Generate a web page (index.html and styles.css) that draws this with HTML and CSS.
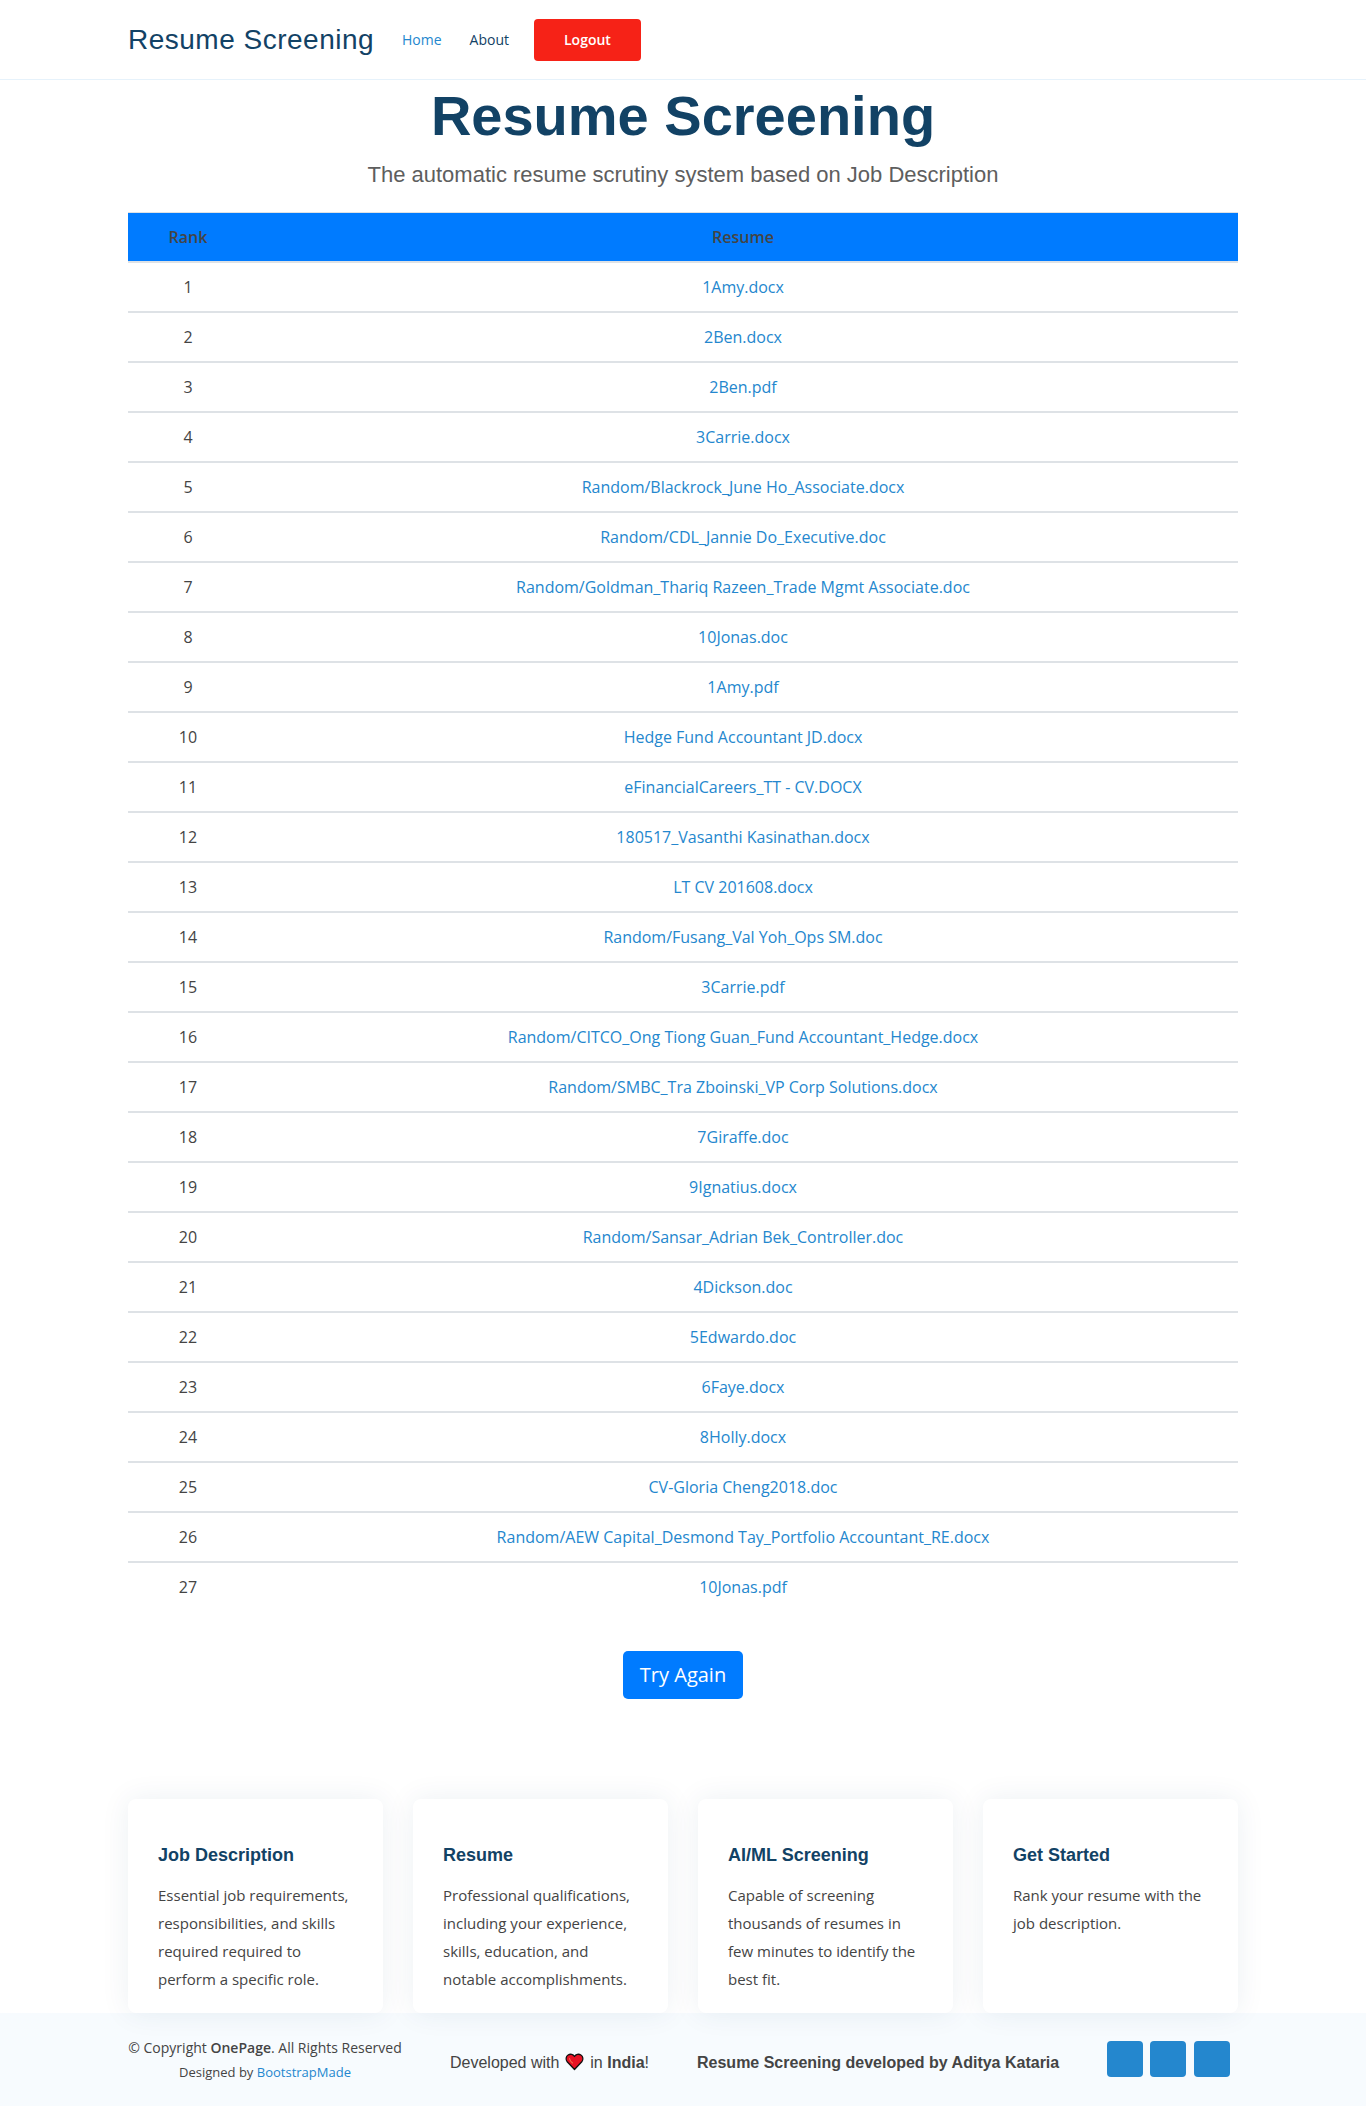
FILE: index.html
```html
<!DOCTYPE html>
<html lang="en">
<head>
<meta charset="utf-8">
<title>Resume Screening</title>
<link rel="stylesheet" href="styles.css">
</head>
<body>
<header class="header">
  <div class="container header-inner">
    <a class="logo" href="#">Resume Screening</a>
    <nav class="nav">
      <a class="nav-link active" href="#">Home</a>
      <a class="nav-link" href="#">About</a>
    </nav>
    <a class="logout" href="#">Logout</a>
  </div>
</header>
<main class="container">
  <h1 class="title">Resume Screening</h1>
  <h2 class="subtitle">The automatic resume scrutiny system based on Job Description</h2>
  <table class="ranking">
    <thead><tr><th class="rank">Rank</th><th>Resume</th></tr></thead>
    <tbody>
      <tr><td>1</td><td><a href="#">1Amy.docx</a></td></tr>
      <tr><td>2</td><td><a href="#">2Ben.docx</a></td></tr>
      <tr><td>3</td><td><a href="#">2Ben.pdf</a></td></tr>
      <tr><td>4</td><td><a href="#">3Carrie.docx</a></td></tr>
      <tr><td>5</td><td><a href="#">Random/Blackrock_June Ho_Associate.docx</a></td></tr>
      <tr><td>6</td><td><a href="#">Random/CDL_Jannie Do_Executive.doc</a></td></tr>
      <tr><td>7</td><td><a href="#">Random/Goldman_Thariq Razeen_Trade Mgmt Associate.doc</a></td></tr>
      <tr><td>8</td><td><a href="#">10Jonas.doc</a></td></tr>
      <tr><td>9</td><td><a href="#">1Amy.pdf</a></td></tr>
      <tr><td>10</td><td><a href="#">Hedge Fund Accountant JD.docx</a></td></tr>
      <tr><td>11</td><td><a href="#">eFinancialCareers_TT - CV.DOCX</a></td></tr>
      <tr><td>12</td><td><a href="#">180517_Vasanthi Kasinathan.docx</a></td></tr>
      <tr><td>13</td><td><a href="#">LT CV 201608.docx</a></td></tr>
      <tr><td>14</td><td><a href="#">Random/Fusang_Val Yoh_Ops SM.doc</a></td></tr>
      <tr><td>15</td><td><a href="#">3Carrie.pdf</a></td></tr>
      <tr><td>16</td><td><a href="#">Random/CITCO_Ong Tiong Guan_Fund Accountant_Hedge.docx</a></td></tr>
      <tr><td>17</td><td><a href="#">Random/SMBC_Tra Zboinski_VP Corp Solutions.docx</a></td></tr>
      <tr><td>18</td><td><a href="#">7Giraffe.doc</a></td></tr>
      <tr><td>19</td><td><a href="#">9Ignatius.docx</a></td></tr>
      <tr><td>20</td><td><a href="#">Random/Sansar_Adrian Bek_Controller.doc</a></td></tr>
      <tr><td>21</td><td><a href="#">4Dickson.doc</a></td></tr>
      <tr><td>22</td><td><a href="#">5Edwardo.doc</a></td></tr>
      <tr><td>23</td><td><a href="#">6Faye.docx</a></td></tr>
      <tr><td>24</td><td><a href="#">8Holly.docx</a></td></tr>
      <tr><td>25</td><td><a href="#">CV-Gloria Cheng2018.doc</a></td></tr>
      <tr><td>26</td><td><a href="#">Random/AEW Capital_Desmond Tay_Portfolio Accountant_RE.docx</a></td></tr>
      <tr><td>27</td><td><a href="#">10Jonas.pdf</a></td></tr>
    </tbody>
  </table>
  <div class="actions"><a class="try-again" href="#">Try Again</a></div>
  <section class="cards">
    <article class="card"><h4>Job Description</h4><p>Essential job requirements, responsibilities, and skills required required to perform a specific role.</p></article>
    <article class="card"><h4>Resume</h4><p>Professional qualifications, including your experience, skills, education, and notable accomplishments.</p></article>
    <article class="card"><h4>AI/ML Screening</h4><p>Capable of screening thousands of resumes in few minutes to identify the best fit.</p></article>
    <article class="card"><h4>Get Started</h4><p>Rank your resume with the job description.</p></article>
  </section>
</main>
<footer class="footer">
  <div class="container footer-inner">
    <div class="legal">
      <div class="copyright">© Copyright <strong>OnePage</strong>. All Rights Reserved</div>
      <div class="credits">Designed by <a href="#">BootstrapMade</a></div>
    </div>
    <div class="made-in">Developed with
      <svg class="heart" viewBox="-0.5 -0.5 19 18" aria-hidden="true"><path d="M9 16 1.7 8.3C0 6.2 0.3 2.9 2.6 1.5 4.9 0.1 7.7 0.8 9 3 10.3 0.8 13.1 0.1 15.4 1.5 17.7 2.9 18 6.2 16.3 8.3Z" fill="#e81224" stroke="#111" stroke-width="1.3" stroke-linejoin="round"/><path d="M4 5Q4.500 7.500 7 9.500" fill="none" stroke="#f4704f" stroke-width="1.1" stroke-linecap="round"/></svg>
      in <strong>India</strong>!</div>
    <strong class="author">Resume Screening developed by Aditya Kataria</strong>
    <div class="social"><a href="#"></a><a href="#"></a><a href="#"></a></div>
  </div>
</footer>
</body>
</html>
```
FILE: styles.css
```css
* { box-sizing: border-box; }
body {
  margin: 0;
  background: #fff;
  color: #444;
  font: 16px/24px "Open Sans", sans-serif;
}
a { color: #2487ce; text-decoration: none; }
h1, h2, h4, p { margin: 0; }
.container { width: 1110px; margin: 0 auto; }

.header { height: 80px; border-bottom: 1px solid #e6f2fb; }
.header-inner { display: flex; align-items: center; height: 79px; }
.logo {
  width: 247px;
  color: #124265;
  font: 28px/34px "Liberation Sans", Arial, sans-serif;
  letter-spacing: 0.5px;
  white-space: nowrap;
}
.nav { display: flex; gap: 28px; margin-left: 27px; }
.nav-link { color: #124265; font-size: 14px; }
.nav-link.active { color: #2487ce; }
.logout {
  margin: 1px 0 0 25px;
  padding: 9px 30px;
  border-radius: 4px;
  background: #f62217;
  color: #fff;
  font-size: 14px;
  font-weight: 600;
}

.title {
  padding-top: 2px;
  color: #124265;
  font: bold 56px/67px "Liberation Sans", Arial, sans-serif;
  text-align: center;
}
.subtitle {
  padding-top: 13px;
  height: 63px;
  color: #5e5e5e;
  font: 22px/26px "Liberation Sans", Arial, sans-serif;
  text-align: center;
}

.ranking {
  width: 100%;
  border-spacing: 0;
  table-layout: fixed;
  text-align: center;
}
.ranking th {
  height: 51px;
  padding: 0;
  border-top: 1px solid #dee2e6;
  border-bottom: 2px solid #dee2e6;
  background: #007bff;
  font-weight: 600;
}
.ranking .rank { width: 120px; }
.ranking td { height: 50px; padding: 0; border-bottom: 2px solid #dee2e6; }
.ranking tr:last-child td { border-bottom-color: transparent; }

.actions { display: flex; justify-content: center; padding: 38px 0 100px; }
.try-again {
  width: 120px;
  padding: 9px 0;
  border-radius: 5px;
  background: #007bff;
  color: #fff;
  font-size: 20px;
  line-height: 30px;
  text-align: center;
}

.cards { display: grid; grid-template-columns: repeat(4, 1fr); gap: 30px; }
.card {
  position: relative;
  z-index: 1;
  height: 214px;
  padding: 45px 30px 0;
  border-radius: 8px;
  background: #fff;
  box-shadow: 0 0 29px rgba(18, 66, 101, 0.08);
}
.card h4 {
  margin-bottom: 15px;
  color: #124265;
  font: bold 18px/22px "Liberation Sans", Arial, sans-serif;
}
.card p { font-size: 15px; line-height: 28px; }

.footer { height: 93px; background: #f7fbfe; }
.footer-inner { display: flex; align-items: flex-start; }
.legal { width: 274px; padding-top: 23px; text-align: center; white-space: nowrap; }
.copyright { font-size: 14px; }
.copyright strong { font-weight: 600; }
.credits { font-size: 13px; }
.made-in, .author {
  padding-top: 38px;
  font-family: "Liberation Sans", Arial, sans-serif;
  white-space: nowrap;
}
.made-in { width: 199px; margin-left: 48px; }
.author { width: 362px; margin-left: 48px; }
.heart { width: 19px; height: 18px; margin: 0 1.5px; vertical-align: -3px; }
.social { display: flex; gap: 7.6px; margin: 28px 8px 0 auto; }
.social a { width: 36px; height: 36px; border-radius: 4px; background: #2487ce; }
```
